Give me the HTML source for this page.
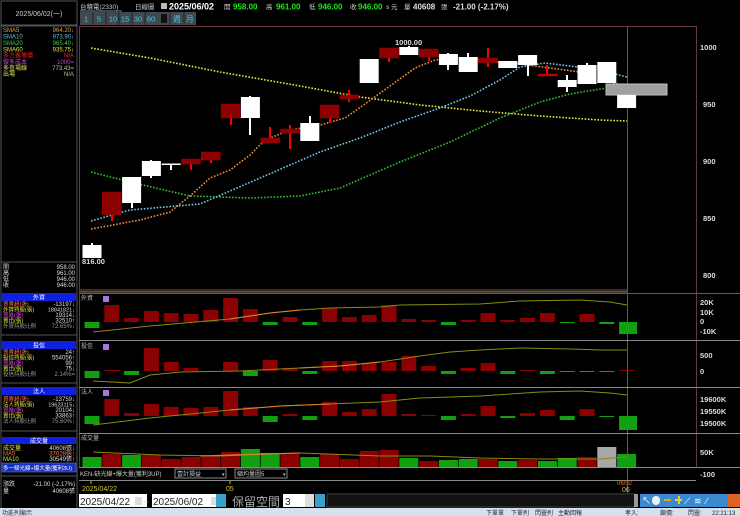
<!DOCTYPE html>
<html><head><meta charset="utf-8"><style>
html,body{margin:0;padding:0;background:#000;width:740px;height:516px;overflow:hidden}
svg{display:block}
text{font-family:"Liberation Sans","Noto Sans CJK TC",sans-serif}
.s{font-size:6px}
</style></head><body>
<svg width="740" height="516" viewBox="0 0 740 516" xmlns="http://www.w3.org/2000/svg">
<rect width="740" height="516" fill="#000"/>
<!-- LEFT PANEL -->
<rect x="1" y="1" width="76" height="24" fill="#000" stroke="#555" stroke-width="1"/>
<text x="39" y="16" font-size="7" fill="#ccc" text-anchor="middle">2025/06/02(一)</text>
<rect x="1" y="26" width="76" height="490" fill="none" stroke="#555"/>
<g class="s">
<text x="3" y="32" fill="#e0a050">SMA5</text><text x="74" y="32" fill="#e0a050" text-anchor="end">964.20↓</text>
<text x="3" y="38.5" fill="#60c0e0">SMA10</text><text x="74" y="38.5" fill="#60c0e0" text-anchor="end">973.90↓</text>
<text x="3" y="45" fill="#40d040">SMA20</text><text x="74" y="45" fill="#40d040" text-anchor="end">965.40↓</text>
<text x="3" y="51.5" fill="#e0e040">SMA60</text><text x="74" y="51.5" fill="#e0e040" text-anchor="end">935.75↓</text>
<text x="3" y="57.5" fill="#ff2020">多方進場價</text><text x="74" y="57.5" fill="#ff2020" text-anchor="end">N/A</text>
<text x="3" y="64" fill="#d040d0">做多成本</text><text x="74" y="64" fill="#d040d0" text-anchor="end">1000=</text>
<text x="3" y="70" fill="#e0e060">多查場線</text><text x="74" y="70" fill="#c0c0a0" text-anchor="end">773.43=</text>
<text x="3" y="76" fill="#e0e060">出場</text><text x="74" y="76" fill="#c0c0a0" text-anchor="end">N/A</text>
</g>
<line x1="1" y1="262" x2="77" y2="262" stroke="#555"/>
<g class="s" fill="#ddd">
<text x="3" y="269">開</text><text x="75" y="269" text-anchor="end">958.00</text>
<text x="3" y="275">高</text><text x="75" y="275" text-anchor="end">961.00</text>
<text x="3" y="281">低</text><text x="75" y="281" text-anchor="end">946.00</text>
<text x="3" y="287">收</text><text x="75" y="287" text-anchor="end">946.00</text>
</g>
<g class="s">
<rect x="2" y="293" width="74" height="8" fill="#1020e0"/><text x="39" y="299.5" fill="#fff" text-anchor="middle">外資</text>
<text x="3" y="306" fill="#ff7040" font-size="5.5">買賣超(張)</text><text x="75" y="306" fill="#ddd" text-anchor="end">-13197↓</text>
<text x="3" y="311.5" fill="#e0e040" font-size="5.5">外資持股(張)</text><text x="75" y="311.5" fill="#ddd" text-anchor="end" font-size="5.5">18841821↓</text>
<text x="3" y="317" fill="#e040e0" font-size="5.5">買進(張)</text><text x="75" y="317" fill="#ddd" text-anchor="end">19314↓</text>
<text x="3" y="322.5" fill="#e0e040" font-size="5.5">賣出(張)</text><text x="75" y="322.5" fill="#ddd" text-anchor="end">32510↑</text>
<text x="3" y="328" fill="#999" font-size="5.5">外資持股比例</text><text x="75" y="328" fill="#999" text-anchor="end">72.65%↓</text>
<line x1="1" y1="335" x2="77" y2="335" stroke="#555"/>
<rect x="2" y="341" width="74" height="8" fill="#1020e0"/><text x="39" y="347.5" fill="#fff" text-anchor="middle">投信</text>
<text x="3" y="354" fill="#ff7040" font-size="5.5">買賣超(張)</text><text x="75" y="354" fill="#ddd" text-anchor="end">24↑</text>
<text x="3" y="359.5" fill="#e0e040" font-size="5.5">投信持股(張)</text><text x="75" y="359.5" fill="#ddd" text-anchor="end">554056↑</text>
<text x="3" y="365" fill="#e040e0" font-size="5.5">買進(張)</text><text x="75" y="365" fill="#ddd" text-anchor="end">99↑</text>
<text x="3" y="370.5" fill="#e0e040" font-size="5.5">賣出(張)</text><text x="75" y="370.5" fill="#ddd" text-anchor="end">75↓</text>
<text x="3" y="376" fill="#999" font-size="5.5">投信持股比例</text><text x="75" y="376" fill="#999" text-anchor="end">2.14%=</text>
<line x1="1" y1="383" x2="77" y2="383" stroke="#555"/>
<rect x="2" y="387" width="74" height="8" fill="#1020e0"/><text x="39" y="393.5" fill="#fff" text-anchor="middle">法人</text>
<text x="3" y="401" fill="#ff7040" font-size="5.5">買賣超(張)</text><text x="75" y="401" fill="#ddd" text-anchor="end">-13759↓</text>
<text x="3" y="406.5" fill="#e0e040" font-size="5.5">法人持股(張)</text><text x="75" y="406.5" fill="#ddd" text-anchor="end" font-size="5.5">19623115↓</text>
<text x="3" y="412" fill="#e040e0" font-size="5.5">買進(張)</text><text x="75" y="412" fill="#ddd" text-anchor="end">20104↓</text>
<text x="3" y="417.5" fill="#e0e040" font-size="5.5">賣出(張)</text><text x="75" y="417.5" fill="#ddd" text-anchor="end">33863↑</text>
<text x="3" y="423" fill="#999" font-size="5.5">法人持股比例</text><text x="75" y="423" fill="#999" text-anchor="end">75.60%↓</text>
<line x1="1" y1="431" x2="77" y2="431" stroke="#555"/>
<rect x="2" y="437" width="74" height="7" fill="#1020e0"/><text x="39" y="443" fill="#fff" text-anchor="middle">成交量</text>
<text x="3" y="450" fill="#e0e040">成交量</text><text x="75" y="450" fill="#ddd" text-anchor="end">40608張↓</text>
<text x="3" y="455.5" fill="#ff7040">MA5</text><text x="75" y="455.5" fill="#ff8040" text-anchor="end">37028張↑</text>
<text x="3" y="461" fill="#e0e040">MA10</text><text x="75" y="461" fill="#ddd" text-anchor="end">30549張↑</text>
<rect x="2" y="463" width="74" height="9" fill="#1830c0" stroke="#6080ff" stroke-width=".5"/>
<text x="3" y="470" fill="#fff" font-size="5.5">多一條光線+爆大量(獲利3U)</text>
<line x1="1" y1="476" x2="77" y2="476" stroke="#555"/>
<text x="3" y="486" fill="#ddd">漲跌</text><text x="75" y="486" fill="#ddd" text-anchor="end">-21.00 (-2.17%)</text>
<text x="3" y="493" fill="#ddd">量</text><text x="75" y="493" fill="#ddd" text-anchor="end">40608張</text>
</g>

<!-- TOP BAR -->
<text x="80" y="9" font-size="6.5" fill="#ccc">台積電(2330)</text>
<line x1="80" y1="11" x2="122" y2="11" stroke="#888"/>
<text x="135" y="9" font-size="6.5" fill="#ccc">日線圖</text>
<rect x="161" y="3" width="6" height="6" fill="#bbb"/>
<text x="169" y="9.5" font-size="9" font-weight="bold" fill="#fff">2025/06/02</text>
<text x="224" y="9" font-size="6.5" fill="#ccc">開</text><text x="233" y="9.5" font-size="8" font-weight="bold" fill="#20e020">958.00</text>
<text x="266" y="9" font-size="6.5" fill="#ccc">高</text><text x="276" y="9.5" font-size="8" font-weight="bold" fill="#20e020">961.00</text>
<text x="309" y="9" font-size="6.5" fill="#ccc">低</text><text x="318" y="9.5" font-size="8" font-weight="bold" fill="#20e020">946.00</text>
<text x="350" y="9" font-size="6.5" fill="#ccc">收</text><text x="358" y="9.5" font-size="8" font-weight="bold" fill="#20e020">946.00</text>
<text x="386" y="9" font-size="6.5" fill="#ccc">s 元</text>
<text x="404" y="9" font-size="6.5" fill="#ccc">量</text><text x="413" y="9.5" font-size="8" font-weight="bold" fill="#ddd">40608</text><text x="441" y="9" font-size="6.5" fill="#ccc">張</text>
<text x="453" y="9.5" font-size="8" font-weight="bold" fill="#ddd">-21.00 (-2.17%)</text>
<g font-size="7.5" fill="#40d0e0" text-anchor="middle">
<rect x="80" y="12" width="78" height="13" fill="#404850"/>
<rect x="158" y="12" width="38" height="13" fill="#404850"/>
<rect x="161" y="14" width="6" height="9" fill="#111"/>
<text x="86" y="21.5">1</text><text x="99" y="21.5">5</text><text x="113" y="21.5">10</text><text x="125" y="21.5">15</text><text x="138" y="21.5">30</text><text x="151" y="21.5">60</text><text x="177" y="21.5">週</text><text x="190" y="21.5">月</text>
<line x1="93" y1="12" x2="93" y2="25" stroke="#222"/><line x1="106" y1="12" x2="106" y2="25" stroke="#222"/><line x1="119" y1="12" x2="119" y2="25" stroke="#222"/><line x1="132" y1="12" x2="132" y2="25" stroke="#222"/><line x1="145" y1="12" x2="145" y2="25" stroke="#222"/><line x1="170" y1="12" x2="170" y2="25" stroke="#222"/><line x1="184" y1="12" x2="184" y2="25" stroke="#222"/>
</g>

<!-- MAIN FRAME -->
<line x1="79.5" y1="26.5" x2="696.5" y2="26.5" stroke="#6a3838"/>
<line x1="79.5" y1="26" x2="79.5" y2="467" stroke="#6a3838"/>
<line x1="696.5" y1="26" x2="696.5" y2="467" stroke="#6a3838"/>
<line x1="627.5" y1="26" x2="627.5" y2="493" stroke="#a04020" stroke-width="1"/>
<rect x="80" y="289" width="547" height="3" fill="#3a2a20"/>
<line x1="80" y1="292" x2="627" y2="292" stroke="#8a7050"/>
<line x1="79" y1="293.5" x2="740" y2="293.5" stroke="#705070"/>
<line x1="79" y1="340.5" x2="740" y2="340.5" stroke="#888"/>
<line x1="79" y1="387.5" x2="740" y2="387.5" stroke="#888"/>
<line x1="79" y1="433.5" x2="740" y2="433.5" stroke="#888"/>
<line x1="79" y1="467.5" x2="740" y2="467.5" stroke="#888"/>
<line x1="79" y1="480.5" x2="696" y2="480.5" stroke="#888"/>

<!-- MA LINES -->
<g fill="none" stroke-width="1.6" stroke-dasharray="1.6 1.6">
<polyline stroke="#e8e840" points="91,48 150,58 220,72 300,86 360,97 420,105 480,111 540,116 600,120 627,121"/>
<polyline stroke="#30c030" points="91,172 130,182 190,196 250,198 300,196 340,188 400,162 450,142 500,118 540,102 570,94 600,89 627,86"/>
<polyline stroke="#70c8e8" points="91,221 130,210 200,204 260,178 320,152 360,138 400,122 440,108 470,96 500,80 520,67 545,63 570,66 600,70 627,77"/>
<polyline stroke="#e89040" points="91,229 140,220 170,212 190,196 210,178 230,170 250,155 265,140 290,130 320,125 345,118 365,104 390,86 415,68 435,60 460,58 490,61 520,64 550,68 580,72 605,80 627,87"/>
</g>

<!-- CANDLES -->
<g>
<g stroke-width="2">
<line x1="92" y1="243" x2="92" y2="258" stroke="#fff"/>
<line x1="112" y1="192" x2="112" y2="221" stroke="#f00"/>
<line x1="132" y1="177" x2="132" y2="208" stroke="#fff"/>
<line x1="151" y1="160" x2="151" y2="178" stroke="#fff"/>
<line x1="171" y1="164" x2="171" y2="170" stroke="#fff"/>
<line x1="191" y1="159" x2="191" y2="170" stroke="#f00"/>
<line x1="211" y1="152" x2="211" y2="163" stroke="#f00"/>
<line x1="231" y1="104" x2="231" y2="125" stroke="#f00"/>
<line x1="250" y1="96" x2="250" y2="135" stroke="#fff"/>
<line x1="270" y1="127" x2="270" y2="143" stroke="#f00"/>
<line x1="290" y1="125" x2="290" y2="149" stroke="#f00"/>
<line x1="310" y1="116" x2="310" y2="141" stroke="#fff"/>
<line x1="330" y1="105" x2="330" y2="123" stroke="#f00"/>
<line x1="349" y1="90" x2="349" y2="102" stroke="#f00"/>
<line x1="389" y1="48" x2="389" y2="62" stroke="#f00"/>
<line x1="409" y1="46" x2="409" y2="55" stroke="#fff"/>
<line x1="429" y1="49" x2="429" y2="61" stroke="#f00"/>
<line x1="448" y1="53" x2="448" y2="70" stroke="#fff"/>
<line x1="468" y1="53" x2="468" y2="72" stroke="#fff"/>
<line x1="488" y1="48" x2="488" y2="67" stroke="#f00"/>
<line x1="528" y1="55" x2="528" y2="76" stroke="#fff"/>
<line x1="547" y1="65" x2="547" y2="76" stroke="#f00"/>
<line x1="567" y1="75" x2="567" y2="92" stroke="#fff"/>
<line x1="587" y1="63" x2="587" y2="84" stroke="#fff"/>
<line x1="627" y1="89" x2="627" y2="108" stroke="#fff"/>
</g>
<rect x="606" y="84" width="61" height="11" fill="#a0a0a0" stroke="#c0c0c0"/>
<g fill="#fff">
<rect x="82.5" y="245" width="19" height="13"/>
<rect x="122.1" y="177" width="19" height="26"/>
<rect x="141.9" y="161" width="19" height="15"/>
<rect x="161.7" y="163.5" width="19" height="1.5"/>
<rect x="240.9" y="97" width="19" height="21"/>
<rect x="300.3" y="123" width="19" height="18"/>
<rect x="359.7" y="59" width="19" height="24"/>
<rect x="399.3" y="47" width="19" height="8"/>
<rect x="438.9" y="54" width="19" height="11"/>
<rect x="458.7" y="57" width="19" height="15"/>
<rect x="498.3" y="61" width="19" height="7"/>
<rect x="518.1" y="55" width="19" height="10"/>
<rect x="557.7" y="80" width="19" height="7"/>
<rect x="577.5" y="65" width="19" height="19"/>
<rect x="597.3" y="62" width="19" height="21"/>
<rect x="617.1" y="95" width="19" height="13"/>
</g>
<g fill="#8b0000" stroke="#a00000" stroke-width=".5">
<rect x="102.3" y="192" width="19" height="23"/>
<rect x="181.5" y="159" width="19" height="5"/>
<rect x="201.3" y="152" width="19" height="8"/>
<rect x="221.1" y="104" width="19" height="14"/>
<rect x="260.7" y="138" width="19" height="5"/>
<rect x="280.5" y="129" width="19" height="4"/>
<rect x="320.1" y="105" width="19" height="13"/>
<rect x="339.9" y="95" width="19" height="4"/>
<rect x="379.5" y="48" width="19" height="10"/>
<rect x="419.1" y="49" width="19" height="8"/>
<rect x="478.5" y="58" width="19" height="5"/>
<rect x="537.9" y="74" width="19" height="2" fill="#d00000"/>
</g>
</g>
<text x="82" y="264" font-size="7.5" font-weight="bold" fill="#ddd">816.00</text>
<text x="395" y="45" font-size="7.5" font-weight="bold" fill="#ddd">1000.00</text>

<!-- RIGHT AXIS -->
<g font-size="7.5" font-weight="bold" fill="#ddd">
<text x="700" y="50">1000</text><text x="703" y="107">950</text><text x="703" y="164">900</text><text x="703" y="221">850</text><text x="703" y="278">800</text>
<text x="700" y="305">20K</text><text x="700" y="315">10K</text><text x="700" y="324">0</text><text x="700" y="334">-10K</text>
<text x="700" y="358">500</text><text x="700" y="374">0</text>
<text x="700" y="402">19600K</text><text x="700" y="414">19550K</text><text x="700" y="426">19500K</text>
<text x="700" y="455">50K</text><text x="700" y="477">-100</text>
</g>

<g font-size="6" fill="#bbb">
<text x="81" y="300">外資</text><text x="81" y="348">投信</text><text x="81" y="394">法人</text><text x="81" y="440">成交量</text>
</g>
<g fill="#b070e0"><rect x="103" y="296" width="6" height="6"/><rect x="103" y="344" width="6" height="6"/><rect x="103" y="390" width="6" height="6"/></g>

<!-- PANEL 1 -->
<g fill="#8b0000">
<rect x="104.3" y="305" width="15" height="17"/><rect x="124.1" y="318" width="15" height="4"/><rect x="143.9" y="311" width="15" height="11"/><rect x="163.7" y="313" width="15" height="9"/><rect x="183.5" y="314" width="15" height="8"/><rect x="203.3" y="310" width="15" height="12"/><rect x="223.1" y="298" width="15" height="24"/><rect x="242.9" y="309" width="15" height="13"/><rect x="282.5" y="317" width="15" height="5"/><rect x="322.1" y="308" width="15" height="14"/><rect x="341.9" y="317" width="15" height="5"/><rect x="361.7" y="315" width="15" height="7"/><rect x="381.5" y="305" width="15" height="17"/><rect x="401.3" y="319" width="15" height="3"/><rect x="421.1" y="320" width="15" height="2"/><rect x="460.7" y="320" width="15" height="2"/><rect x="480.5" y="313" width="15" height="9"/><rect x="500.3" y="320" width="15" height="2"/><rect x="520.1" y="318" width="15" height="4"/><rect x="539.9" y="313" width="15" height="9"/><rect x="579.5" y="314" width="15" height="8"/>
</g>
<g fill="#10a010">
<rect x="84.5" y="322" width="15" height="6"/><rect x="262.7" y="322" width="15" height="3"/><rect x="302.3" y="322" width="15" height="3"/><rect x="440.9" y="322" width="15" height="3"/><rect x="559.7" y="322" width="15" height="1"/><rect x="599.3" y="322" width="15" height="2"/><rect x="619.1" y="322" width="18" height="12"/>
</g>
<!-- PANEL 2 -->
<g fill="#8b0000">
<rect x="104.3" y="370" width="15" height="1"/><rect x="143.9" y="348" width="15" height="23"/><rect x="163.7" y="362" width="15" height="9"/><rect x="183.5" y="368" width="15" height="3"/><rect x="223.1" y="362" width="15" height="9"/><rect x="262.7" y="360" width="15" height="11"/><rect x="282.5" y="368" width="15" height="3"/><rect x="322.1" y="361" width="15" height="10"/><rect x="341.9" y="361" width="15" height="10"/><rect x="361.7" y="363" width="15" height="8"/><rect x="381.5" y="362" width="15" height="9"/><rect x="401.3" y="356" width="15" height="15"/><rect x="421.1" y="366" width="15" height="5"/><rect x="460.7" y="368" width="15" height="3"/><rect x="480.5" y="363" width="15" height="8"/><rect x="520.1" y="370" width="15" height="1"/><rect x="619.1" y="370" width="15" height="1"/>
</g>
<g fill="#10a010">
<rect x="84.5" y="371" width="15" height="7"/><rect x="124.1" y="371" width="15" height="4"/><rect x="242.9" y="371" width="15" height="5"/><rect x="302.3" y="371" width="15" height="3"/><rect x="440.9" y="371" width="15" height="3"/><rect x="500.3" y="371" width="15" height="3"/><rect x="539.9" y="371" width="15" height="3"/><rect x="559.7" y="371" width="15" height="1"/><rect x="579.5" y="371" width="15" height="1"/><rect x="599.3" y="371" width="15" height="1"/>
</g>
<!-- PANEL 3 -->
<g fill="#8b0000">
<rect x="104.3" y="399" width="15" height="17"/><rect x="124.1" y="413" width="15" height="3"/><rect x="143.9" y="404" width="15" height="12"/><rect x="163.7" y="407" width="15" height="9"/><rect x="183.5" y="408" width="15" height="8"/><rect x="203.3" y="407" width="15" height="9"/><rect x="223.1" y="391" width="15" height="25"/><rect x="242.9" y="407" width="15" height="9"/><rect x="282.5" y="414" width="15" height="2"/><rect x="322.1" y="402" width="15" height="14"/><rect x="341.9" y="412" width="15" height="4"/><rect x="361.7" y="409" width="15" height="7"/><rect x="381.5" y="394" width="15" height="22"/><rect x="401.3" y="414" width="15" height="2"/><rect x="421.1" y="415" width="15" height="1"/><rect x="460.7" y="414" width="15" height="2"/><rect x="480.5" y="406" width="15" height="10"/><rect x="520.1" y="413" width="15" height="3"/><rect x="539.9" y="410" width="15" height="6"/><rect x="579.5" y="409" width="15" height="7"/>
</g>
<g fill="#10a010">
<rect x="84.5" y="416" width="15" height="8"/><rect x="262.7" y="416" width="15" height="6"/><rect x="302.3" y="416" width="15" height="4"/><rect x="440.9" y="416" width="15" height="4"/><rect x="500.3" y="416" width="15" height="2"/><rect x="559.7" y="416" width="15" height="4"/><rect x="599.3" y="416" width="15" height="1"/><rect x="619.1" y="416" width="18" height="14"/>
</g>
<!-- VOLUME -->
<g>
<rect x="82.5" y="457" width="19" height="10" fill="#10a010"/><rect x="102.3" y="454" width="19" height="13" fill="#8b0000"/><rect x="122.1" y="455" width="19" height="12" fill="#10a010"/><rect x="141.9" y="455" width="19" height="12" fill="#8b0000"/><rect x="161.7" y="459" width="19" height="8" fill="#8b0000"/><rect x="181.5" y="457" width="19" height="10" fill="#8b0000"/><rect x="201.3" y="455" width="19" height="12" fill="#8b0000"/><rect x="221.1" y="452" width="19" height="15" fill="#8b0000"/><rect x="240.9" y="449" width="19" height="18" fill="#10a010"/><rect x="260.7" y="453" width="19" height="14" fill="#10a010"/><rect x="280.5" y="454" width="19" height="13" fill="#8b0000"/><rect x="300.3" y="457" width="19" height="10" fill="#10a010"/><rect x="320.1" y="454" width="19" height="13" fill="#8b0000"/><rect x="339.9" y="459" width="19" height="8" fill="#8b0000"/><rect x="359.7" y="451" width="19" height="16" fill="#8b0000"/><rect x="379.5" y="450" width="19" height="17" fill="#8b0000"/><rect x="399.3" y="458" width="19" height="9" fill="#10a010"/><rect x="419.1" y="461" width="19" height="6" fill="#8b0000"/><rect x="438.9" y="460" width="19" height="7" fill="#10a010"/><rect x="458.7" y="459" width="19" height="8" fill="#10a010"/><rect x="478.5" y="459" width="19" height="8" fill="#8b0000"/><rect x="498.3" y="461" width="19" height="6" fill="#10a010"/><rect x="518.1" y="460" width="19" height="7" fill="#8b0000"/><rect x="537.9" y="461" width="19" height="6" fill="#10a010"/><rect x="557.7" y="458" width="19" height="9" fill="#10a010"/><rect x="577.5" y="457" width="19" height="10" fill="#8b0000"/><rect x="597.3" y="447" width="19" height="20" fill="#a8a8a8"/><rect x="617.1" y="454" width="19" height="13" fill="#10a010"/>
</g>
<g fill="none" stroke="#8a8a10" stroke-width="1">
<polyline points="93,332 150,326 230,319 270,313 300,310 330,308 380,307 400,305 480,304 520,301 580,300 610,302 627,305"/>
<polyline points="93,381 130,383 150,375 180,372 240,371 300,368 340,366 380,362 420,356 450,352 480,350 520,348 570,349 600,350 627,350"/>
<polyline points="93,425 150,418 230,410 280,406 330,404 380,402 420,398 480,396 540,392 580,391 610,393 627,395"/>
<polyline points="93,452 160,455 220,456 300,453 380,456 430,456 480,458 540,459 600,459 627,457"/>
</g>
<g fill="none" stroke="#e08030" stroke-width="1">
<polyline points="230,319 270,313 300,310"/><polyline points="300,368 340,366 380,362"/><polyline points="230,410 280,406 330,404"/><polyline points="200,456 260,454 300,453"/>
</g>

<text x="80" y="476" font-size="6" fill="#ccc">KEN-缺光線+爆大量(獲利3UP)</text>
<rect x="175" y="469" width="51" height="9" fill="#000" stroke="#888"/><text x="177" y="476" font-size="6" fill="#ccc">壹計損益</text><text x="222" y="476" font-size="5" fill="#ccc">▾</text>
<rect x="235" y="469" width="52" height="9" fill="#000" stroke="#888"/><text x="237" y="476" font-size="6" fill="#ccc">縮均量圖5</text><text x="283" y="476" font-size="5" fill="#ccc">▾</text>

<line x1="91" y1="481" x2="91" y2="484" stroke="#cc0"/>
<text x="82" y="491" font-size="7" fill="#c8c840">2025/04/22</text>
<line x1="230" y1="481" x2="230" y2="484" stroke="#cc0"/>
<text x="226" y="491" font-size="7" fill="#c8c840">05</text>
<text x="617" y="485" font-size="6" fill="#e07030">06/02</text>
<text x="622" y="492" font-size="7" fill="#c8c840">06</text>

<rect x="79" y="494" width="68" height="13" fill="#fff"/><text x="80" y="505" font-size="10" fill="#222">2025/04/22</text>
<rect x="135" y="497" width="7" height="8" fill="#ddd"/>
<text x="143" y="505" font-size="9" fill="#ccc">~</text>
<rect x="152" y="494" width="72" height="13" fill="#fff"/><text x="153" y="505" font-size="10" fill="#222">2025/06/02</text>
<rect x="211" y="497" width="7" height="8" fill="#ddd"/>
<rect x="216" y="494" width="10" height="13" fill="#3aa0c8"/>
<text x="232" y="506" font-size="12" fill="#aaa">保留空間</text>
<rect x="283" y="494" width="22" height="13" fill="#fff"/><text x="285" y="505" font-size="10" fill="#222">3</text>
<rect x="305" y="494" width="9" height="13" fill="#ddd"/>
<rect x="315" y="494" width="10" height="13" fill="#3aa0c8"/>
<rect x="327" y="494" width="308" height="13" fill="#111" stroke="#444"/>
<rect x="634" y="494" width="4" height="13" fill="#999"/>
<rect x="640" y="494" width="100" height="13" fill="#3a8ad0"/>
<g fill="#fff" font-size="9">
<text x="642" y="504">↖</text><rect x="652" y="496" width="8" height="9" rx="4" fill="#f0f0f0"/><rect x="664" y="499" width="7" height="2" fill="#f0a020"/><rect x="675" y="499" width="7" height="2" fill="#f0d020"/><rect x="678" y="496" width="2" height="8" fill="#f0d020"/><text x="684" y="504">⟋</text><text x="694" y="504">≋</text><text x="706" y="504">∕</text>
</g>
<rect x="728" y="494" width="12" height="13" fill="#e06020"/>
<rect x="0" y="508" width="740" height="8" fill="#d8e0ec"/>
<text x="2" y="515" font-size="6" fill="#334">功能列顯示</text>
<g font-size="6" fill="#223">
<text x="486" y="515">下單單</text><text x="511" y="515">下單列</text><text x="535" y="515">閃靈列</text><text x="558" y="515">主動回報</text>
<text x="625" y="515">孝入:</text><text x="660" y="515">鎖價:</text><text x="688" y="515">閃靈:</text><text x="712" y="515">22:21:13</text>
</g>
</svg>
</body></html>
